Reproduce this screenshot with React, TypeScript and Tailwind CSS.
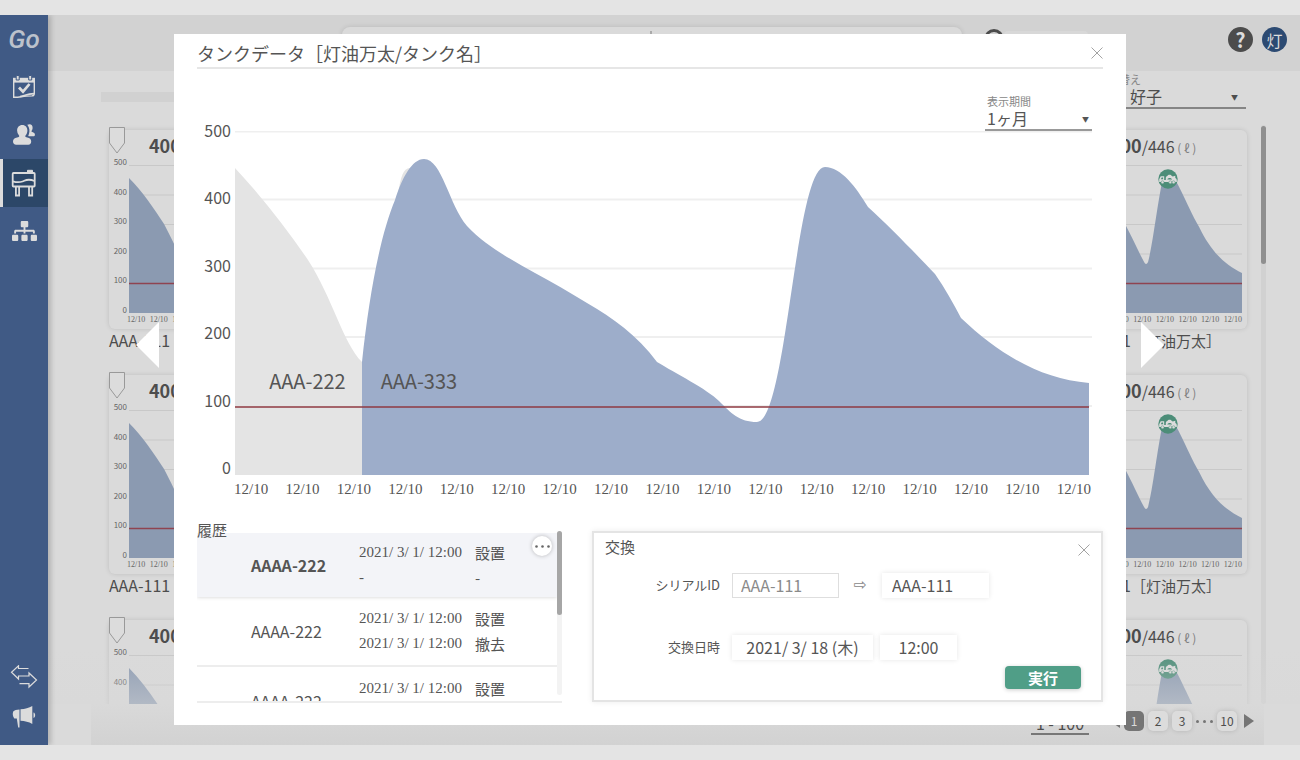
import React, { useState } from 'react';
import { FaSitemap } from 'react-icons/fa';

const LEVELS = [500, 400, 300, 200, 100, 0];

const HISTORY = [
  { id: 'AAAA-222', from: '2021/ 3/ 1/ 12:00', to: '-', start: '設置', end: '-' },
  { id: 'AAAA-222', from: '2021/ 3/ 1/ 12:00', to: '2021/ 3/ 1/ 12:00', start: '設置', end: '撤去' },
  { id: 'AAAA-222', from: '2021/ 3/ 1/ 12:00', to: '2021/ 3/ 1/ 12:00', start: '設置', end: '撤去' },
];

/* ---------- icons ---------- */

function CalendarIcon() {
  return (
    <svg viewBox="0 0 24 24" className="w-6 h-6" fill="none" stroke="currentColor" strokeWidth="1.4">
      <path d="M1.700 6v16.300c6 .2 7.500-1 13-1.200l5.300-.2c1.500-.1 2.300-1 2.300-2.500V6" />
      <path d="M1 2.800h22v4.800H1z" fill="currentColor" stroke="none" />
      <path d="M4.200 0.500h3V5h-3zM16.700 0.500h3V5h-3z" fill="currentColor" stroke="#405a85" strokeWidth="1" />
      <path d="M7 12.500l4 4.200 6.500-7.700" strokeWidth="2.700" />
      <path d="M8 21.500c5-.3 6-2.800 14-2.900" strokeWidth="1.600" />
    </svg>
  );
}

function PeopleIcon() {
  return (
    <svg viewBox="0 0 24 24" className="w-6 h-6" fill="currentColor">
      <path d="M15.300 1.800c3-1.600 5.600 0 5.300 3.200-.1 1.500-.5 2.300-1.200 3 .1.700.5.900 1.500 1.200 1.400.4 2 1.200 2 2.500 0 1-.6 1.500-1.600 1.500h-4.500c-.6-.6-.5-1 0-1.800 1.300-3.300.7-7-1.500-9.600z" />
      <path d="M10.300 2c3.200 0 5.100 2.400 5.100 5.600 0 2.200-.8 4.100-2.200 5.300.1.900.6 1.300 2.100 1.500 2.500.4 3.900 1.600 3.900 3.900 0 2.200-1 3.500-2.900 3.500H4.200c-2 0-3.200-1.300-3.200-3.500 0-2.300 1.600-3.500 4.100-3.900 1.500-.2 2.100-.6 2.200-1.500a7 7 0 0 1-2.200-5.300C5.100 4.400 7.100 2 10.300 2z" />
    </svg>
  );
}

function TankIcon() {
  return (
    <svg viewBox="0 0 26 28" className="w-[26px] h-7" fill="none" stroke="currentColor" strokeWidth="1.800">
      <rect x="1.700" y="4" width="22" height="13.500" rx="0.800" />
      <path d="M16.500 3V1.300h5V3z" fill="currentColor" strokeWidth="1" />
      <path d="M2 12.300c3.500 1.200 7 1 9.500.2 3-1 5-3.500 12-.5" />
      <path d="M4.900 18v8.500h3.200V18M18 18v8.500h3.200V18" />
    </svg>
  );
}

function SwapIcon() {
  return (
    <svg viewBox="0 0 28 24" className="w-7 h-6" fill="none" stroke="currentColor" strokeWidth="1.200">
      <path d="M18.500 3.500H8.500V.8L1.500 7.300l7 6.700v-3H19V8l7.500 7-7.500 7v-3.300H9.500" />
    </svg>
  );
}

function MegaphoneIcon() {
  return (
    <svg viewBox="0 0 24 24" className="w-6 h-6" fill="currentColor">
      <path d="M1.200 6.500c1-1.500 3.500-2 6.300-2.100v18.100H6.200L4.800 13.500H2.300C.7 11.500.4 8.500 1.200 6.500z" />
      <path d="M8.500 4.300C13 4 17 3 20.300 1v18c-3.500-2-7.500-3.100-11.800-3.200z" />
      <path d="M21.500 7.500c2.200.4 2.200 5 0 5.400z" />
    </svg>
  );
}

function TruckBadge() {
  return (
    <svg viewBox="0 0 20 20" className="w-5 h-5 block">
      <circle cx="10" cy="10" r="9.700" fill="#4c8d78" />
      <path d="M1.200 13v-2.800l1.500-3h3.500v3.700h1.600V9.200c0-1.200.6-2 1.500-2.100.8-1.700 3.700-1.700 4.500 0l1 .5 2.500-.8v2.300c1.300.5 1.700 1.500 1.500 3.900z" fill="#dcdcdc" />
      <path d="M2.800 10.200l.9-1.800h1.400v1.800zM9.300 10.500c.6-2 4-2 4.800 0z" fill="#4c8d78" />
      <g fill="#dcdcdc" stroke="#4c8d78" strokeWidth="0.500">
        <circle cx="4.500" cy="13.300" r="1.500" />
        <circle cx="12.300" cy="13.300" r="1.500" />
        <circle cx="15.600" cy="13.300" r="1.500" />
      </g>
    </svg>
  );
}

function CloseIcon() {
  return (
    <svg viewBox="0 0 12 12" className="w-3 h-3 block" stroke="#8c8c8c" strokeWidth="0.800">
      <path d="M0.500 0.500L11.500 11.500M11.500 0.500L0.500 11.500" />
    </svg>
  );
}

/* ---------- background page ---------- */

function Sidebar() {
  return (
    <nav className="relative z-10 w-12 shrink-0 bg-[#405a85] text-[#dcdcdc] flex flex-col shadow-[3px_0_5px_rgba(0,0,0,0.18)]">
      <a href="#home" className="h-12 flex items-center justify-center text-[26px] font-medium italic text-[#bcc2cc] font-[Roboto,sans-serif]">Go</a>
      <a href="#calendar" aria-label="カレンダー" className="h-12 flex items-center justify-center"><CalendarIcon /></a>
      <a href="#customers" aria-label="顧客" className="h-12 flex items-center justify-center"><PeopleIcon /></a>
      <a href="#tanks" aria-label="タンク" className="h-12 flex items-center justify-center bg-[#2c4768] border-l-[3px] border-[#dcdcdc] pr-[3px]"><TankIcon /></a>
      <a href="#groups" aria-label="組織" className="h-12 flex items-center justify-center"><FaSitemap className="w-[25px] h-[22px]" /></a>
      <a href="#switch" aria-label="切替" className="h-10 mt-auto flex items-center justify-center"><SwapIcon /></a>
      <a href="#news" aria-label="お知らせ" className="h-10 mb-2 flex items-center justify-center"><MegaphoneIcon /></a>
    </nav>
  );
}

function TankCard() {
  return (
    <article>
      <div className="relative h-[199px] rounded-md shadow-[0_0_5px_rgba(0,0,0,0.13)] pl-5 pr-[5px]">
        <svg viewBox="0 0 16 27" className="absolute -top-[3px] left-0 w-4 h-[27px]" fill="#dcdcdc" stroke="#999">
          <path d="M0.500 0.500h15v15.500L8 26 0.500 16z" />
        </svg>
        <h3 className="h-[35px] pl-5 pt-px leading-7 whitespace-nowrap">
          <span className="text-lg leading-7 font-bold">400</span>
          <span className="text-base leading-7">/446</span>
          <span className="text-xs text-[#808080]"> ( ℓ )</span>
        </h3>
        <div className="relative h-[148px]">
          <div className="absolute -left-5 -top-[10px] w-[18px] h-[162px] flex flex-col justify-between text-right text-[8px] leading-[14px] text-[#666]">
            {LEVELS.map((n) => <span key={n}>{n}</span>)}
          </div>
          <svg viewBox="0 0 152 148" preserveAspectRatio="none" className="w-full h-full block">
            <path d="M0 .5H152M0 30H152M0 59.500H152M0 89H152M0 118.500H152" stroke="#c8c8c8" />
            <path
              d="M0 148V13C13 26 24 42 35 59C42 72 48 86 54 97Q56 101 58 97C63 78 67 40 73 12Q79 2 88 20C98 40 102 50 109 62C121 87 135 100 152 108V148Z"
              fill="#8b9ab1"
            />
            <path d="M0 118.500H152" stroke="#8f4350" strokeWidth="1.500" />
          </svg>
          <div className="absolute left-[45%] top-1"><TruckBadge /></div>
        </div>
        <div className="-ml-0.5 pt-px flex justify-between text-[8px] leading-3 text-[#666] font-['Liberation_Serif',serif]">
          {Array.from({ length: 7 }, (_, i) => <span key={i}>12/10</span>)}
        </div>
      </div>
      <p className="text-base leading-[22px] whitespace-nowrap">
        AAA-111<span className="text-[15px]">［灯油万太］</span>
      </p>
    </article>
  );
}

function BackgroundPage() {
  return (
    <div className="flex-1 min-w-0 bg-[#dadada] flex flex-col text-[#4d4d4d]">
      <header className="h-14 shrink-0 bg-[#d2d2d2] flex items-start pr-[13px]">
        <div className="ml-[294px] mt-3 w-[620px] h-9 rounded-lg bg-[#dadada] shadow-[0_0_5px_rgba(0,0,0,0.12)] flex">
          <div className="w-1/2 border-r-2 border-[#aaa] mt-1" />
        </div>
        <div className="ml-[22px] mt-[14px] w-5 h-5 rounded-full border-[3px] border-[#4c4c4c]" />
        <div className="mt-4 w-[84px] h-8 rounded bg-[#d8d8d8]" />
        <button aria-label="ヘルプ" className="ml-auto mt-3 w-[25px] h-[25px] rounded-full bg-[#4c4c4c] text-[#dcdcdc] text-xl leading-6 font-bold">?</button>
        <button aria-label="アカウント" className="ml-[9px] mt-3 w-[25px] h-[25px] rounded-full bg-[#2c4a72] text-[#dcdcdc] text-base leading-6">灯</button>
      </header>

      <div className="h-[38px] shrink-0 flex pl-[53px] pr-[54px]">
        <div className="flex-1 h-[10px] mt-[21px] bg-[#d1d1d1]" />
        <div className="relative ml-8 w-[164px] border-b-2 border-[#858585]">
          <label htmlFor="staff" className="block h-[15px] pl-1 text-[11px] leading-4 text-[#888]">担当切替え</label>
          <select id="staff" className="block w-full h-5 appearance-none text-base leading-5">
            <option>灯油　好子</option>
          </select>
          <span className="absolute right-2 bottom-0 text-[7px] leading-5 pointer-events-none">▼</span>
        </div>
      </div>

      <div className="relative flex-1 min-h-0 mt-4 flex pl-[61px] pr-[34px] overflow-hidden">
        <div className="flex-1 pt-[5px] grid grid-cols-6 gap-x-[15px] gap-y-[23px] content-start">
          {Array.from({ length: 18 }, (_, i) => <TankCard key={i} />)}
        </div>
        <div className="ml-[14px] w-[5px] rounded-full bg-[#d1d1d1]">
          <div className="mt-px h-[138px] rounded-full bg-[#8f8f8f]" />
        </div>
        <div className="absolute inset-x-0 bottom-0 h-14 bg-linear-to-b from-[#d8d8d8]/0 to-[#d8d8d8]/50" />
      </div>

      <footer className="h-[41px] shrink-0 ml-[43px] mr-9 pr-[10px] pb-[7px] flex items-center justify-end bg-linear-to-b from-[#d9d9d9] to-[#d2d2d2] text-xs">
        <span className="w-[58px] mr-[21px] mt-[9px] h-[18px] border-b-2 border-[#777] text-base leading-3 text-center">1 - 100</span>
        <button aria-label="前へ" className="w-[10px] mr-1">
          <svg viewBox="0 0 10 14" className="w-[10px] h-[14px] block" fill="#757575"><path d="M10 0v14L0 7z" /></svg>
        </button>
        <button className="w-5 h-5 rounded-[5px] bg-[#757575] text-[#dadada]">1</button>
        <button className="w-5 h-5 ml-1 rounded-[5px] bg-[#dcdcdc] shadow-[0_0_5px_rgba(0,0,0,0.15)]">2</button>
        <button className="w-5 h-5 ml-1 rounded-[5px] bg-[#dcdcdc] shadow-[0_0_5px_rgba(0,0,0,0.15)]">3</button>
        <svg viewBox="0 0 17 3" className="w-[17px] h-[3px] mx-1" fill="#757575">
          <circle cx="1.500" cy="1.500" r="1.500" /><circle cx="8.500" cy="1.500" r="1.500" /><circle cx="15.500" cy="1.500" r="1.500" />
        </svg>
        <button className="w-5 h-5 rounded-[5px] bg-[#dcdcdc] shadow-[0_0_5px_rgba(0,0,0,0.15)]">10</button>
        <button aria-label="次へ" className="w-[10px] ml-[7px]">
          <svg viewBox="0 0 10 14" className="w-[10px] h-[14px] block" fill="#757575"><path d="M0 0v14l10-7z" /></svg>
        </button>
      </footer>
    </div>
  );
}

/* ---------- dialog ---------- */

function TankChart() {
  return (
    <div className="flex pr-[11px]">
      <div className="-mt-[13px] w-[34px] h-[361px] flex flex-col justify-between text-right text-base leading-6">
        {LEVELS.map((n) => <span key={n}>{n}</span>)}
      </div>
      <div className="flex-1 ml-1">
        <div className="relative h-[344px] text-xl leading-6">
          <svg viewBox="0 0 857 344" preserveAspectRatio="none" className="w-full h-full block">
            <path d="M0 0.500H857M0 68.500H857M0 137.500H857M0 206H857M0 275H857" stroke="#efefef" strokeWidth="2" />
            <path d="M0 344V37C27 66 52 98 73 129C98 168 108 212 127 231V344Z" fill="#e4e4e4" />
            <path d="M163 62C166 46 168 37 175 37V60Z" fill="#e4e4e4" />
            <path
              d="M127 344V231C134 165 145 105 160 69C167 47 177 28 189 28C207 28 214 74 232 95C252 116 277 129 300 142C317 151 334 161 352 172C378 187 402 204 422 231C440 242 472 258 484 270C496 282 504 291 522 291C552 291 560 36 590 36C606 36 621 56 633 76C656 97 681 123 700 143C710 157 718 172 726 187C764 223 805 248 854 252V344Z"
              fill="#9dadca"
            />
            <path d="M0 276H854" stroke="#8f3a42" strokeOpacity="0.750" strokeWidth="2" />
          </svg>
          <span className="absolute left-[4%] top-[238px]">AAA-222</span>
          <span className="absolute left-[17%] top-[238px]">AAA-333</span>
        </div>
        <div className="-ml-px mr-px h-12 pt-1 flex justify-between text-[15px] leading-5 font-['Liberation_Serif',serif]">
          {Array.from({ length: 17 }, (_, i) => <span key={i}>12/10</span>)}
        </div>
      </div>
    </div>
  );
}

function HistoryPanel() {
  return (
    <section className="w-[365px] shrink-0">
      <h3 className="relative z-10 h-[10px] text-[15px] leading-[14px]">履歴</h3>
      <div className="relative h-[170px] flex border-b-2 border-[#ededed]">
        <div className="flex-1 h-[168px] overflow-hidden">
          <table className="w-full border-collapse">
            <tbody>
              {HISTORY.map((row, i) => (
                <tr
                  key={i}
                  className={i === 0 ? 'h-16 bg-[#f3f4f8] shadow-[0_0_4px_rgba(0,0,0,0.2)]' : 'h-[69px] border-b-2 border-[#ededed]'}
                >
                  <td className={i === 0 ? 'pl-[54px] w-[162px] text-base font-bold' : 'pl-[54px] w-[162px] text-base'}>{row.id}</td>
                  <td className="w-[116px] text-[15px] leading-[25px] font-['Liberation_Serif',serif] whitespace-nowrap">
                    {row.from}<br />{row.to}
                  </td>
                  <td className="text-[15px] leading-[25px]">
                    {row.start}<br />{row.end}
                  </td>
                </tr>
              ))}
            </tbody>
          </table>
        </div>
        <button aria-label="メニュー" className="absolute right-[10px] top-[3px] w-5 h-5 rounded-full bg-white shadow-[0_0_4px_rgba(0,0,0,0.25)] flex items-center justify-center">
          <svg viewBox="0 0 15 3" className="w-[15px] h-[3px]" fill="#666">
            <circle cx="1.500" cy="1.500" r="1.300" /><circle cx="7.500" cy="1.500" r="1.300" /><circle cx="13.500" cy="1.500" r="1.300" />
          </svg>
        </button>
        <div className="-mt-0.5 w-[5px] h-[164px] rounded-full bg-[#f3f3f3]">
          <div className="h-[84px] rounded-full bg-[#a6a6a6]" />
        </div>
      </div>
    </section>
  );
}

function ExchangeForm() {
  const [serial, setSerial] = useState('AAA-111');
  const [date, setDate] = useState('2021/ 3/ 18 (木)');
  const [time, setTime] = useState('12:00');

  return (
    <form className="mt-2 flex-1 h-[171px] border-2 border-[#e4e4e4] shadow-[0_0_6px_rgba(0,0,0,0.08)] pl-[11px] pr-5">
      <div className="h-10 flex justify-between">
        <h3 className="pt-0.5 text-[15px] leading-6">交換</h3>
        <button type="button" aria-label="閉じる" className="w-3 h-3 mt-[11px] mr-[-9px]"><CloseIcon /></button>
      </div>
      <div className="h-6 flex items-center">
        <label htmlFor="serial-old" className="w-[115px] mr-3 text-right text-[13px]">シリアルID</label>
        <input id="serial-old" readOnly value="AAA-111" className="w-[107px] h-[25px] px-2 border border-[#dedede] text-base text-[#8a8a8a]" />
        <span className="w-[43px] text-center text-[#888] font-['DejaVu_Sans',sans-serif]">⇨</span>
        <input aria-label="新しいシリアルID" value={serial} onChange={(e) => setSerial(e.target.value)} className="w-[107px] h-[25px] px-[10px] text-base shadow-[0_0_5px_rgba(0,0,0,0.1)]" />
      </div>
      <div className="h-6 mt-[38px] flex items-center">
        <label htmlFor="date" className="w-[115px] mr-3 text-right text-[13px]">交換日時</label>
        <input id="date" value={date} onChange={(e) => setDate(e.target.value)} className="w-[141px] h-[25px] text-center text-base shadow-[0_0_5px_rgba(0,0,0,0.1)]" />
        <input aria-label="交換時刻" value={time} onChange={(e) => setTime(e.target.value)} className="w-[77px] h-[25px] ml-[7px] text-center text-base shadow-[0_0_5px_rgba(0,0,0,0.1)]" />
      </div>
      <div className="mt-[7px] flex justify-end">
        <button type="submit" className="w-[76px] h-[23px] rounded-[4px] bg-[#509e87] text-white text-[15px] leading-[23px] font-bold shadow-[0_1px_4px_rgba(0,0,0,0.2)]">実行</button>
      </div>
    </form>
  );
}

function TankDialog() {
  return (
    <div role="dialog" aria-labelledby="dialog-title" className="flex-1 max-w-[952px] bg-white text-[#555] px-[23px] pb-[22px]">
      <header className="h-[35px] border-b-2 border-[#e6e6e6] flex items-center justify-between">
        <h2 id="dialog-title" className="text-lg leading-6 pt-1">タンクデータ［灯油万太/タンク名］</h2>
        <button aria-label="閉じる" className="mt-1"><CloseIcon /></button>
      </header>

      <div className="h-[62px] flex items-end justify-end pr-[11px]">
        <div className="relative z-10 w-[107px] h-[38px] border-b-2 border-[#999]">
          <label htmlFor="period" className="block h-[15px] pl-0.5 text-[11px] leading-4 text-[#888]">表示期間</label>
          <select id="period" className="block w-full h-5 pl-0.5 appearance-none text-base leading-5">
            <option>1ヶ月</option>
          </select>
          <span className="absolute right-[3px] bottom-0 text-[7px] leading-5 pointer-events-none">▼</span>
        </div>
      </div>

      <TankChart />

      <div className="flex gap-[30px]">
        <HistoryPanel />
        <ExchangeForm />
      </div>
    </div>
  );
}

export default function App() {
  return (
    <div className="min-h-screen bg-[#e4e4e4] py-[15px] font-['Noto_Sans_CJK_JP',sans-serif]">
      <div className="relative h-[calc(100vh-30px)] flex overflow-hidden">
        <Sidebar />
        <BackgroundPage />

        {/* dialog with previous / next arrows */}
        <div className="absolute inset-0 z-20 flex items-start justify-center gap-[15px] pt-[19px]">
          <button aria-label="前のタンク" className="mt-[288px]">
            <svg viewBox="0 0 23 46" className="w-[23px] h-[46px] block" fill="#fff"><path d="M23 0v46L0 23z" /></svg>
          </button>
          <TankDialog />
          <button aria-label="次のタンク" className="mt-[288px]">
            <svg viewBox="0 0 23 46" className="w-[23px] h-[46px] block" fill="#fff"><path d="M0 0v46l23-23z" /></svg>
          </button>
        </div>
      </div>
    </div>
  );
}
